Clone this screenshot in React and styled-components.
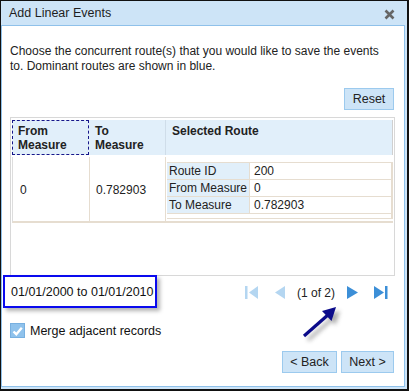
import React from "react";
import styled, { createGlobalStyle } from "styled-components";

const GlobalStyle = createGlobalStyle`
  body {
    margin: 0;
    background: #ffffff;
    font-family: "Liberation Sans", Arial, sans-serif;
  }
`;

const Frame = styled.div`
  box-sizing: border-box;
  width: 409px;
  height: 391px;
  border-top: 1px solid #111;
  border-left: 1px solid #111;
  border-right: 2px solid #111;
  border-bottom: 2px solid #111;
  background: #cde4f7;
  display: flex;
  flex-direction: column;
  padding: 0 2px 2px 0;
`;

const TitleBar = styled.div`
  height: 24px;
  display: flex;
  align-items: center;
  justify-content: space-between;
  padding: 0 10px 0 8px;
  font-size: 12.5px;
  color: #1e1e1e;
`;

const CloseButton = styled.svg`
  width: 11px;
  height: 11px;
  margin-top: 3px;
`;

const Content = styled.div`
  position: relative;
  flex: 1;
  background: #fff;
  border: 1px solid #8fc1ea;
  padding: 0 9px 0 8px;
  display: flex;
  flex-direction: column;
  font-size: 12px;
  color: #222;
`;

const Description = styled.p`
  margin: 18px 0 0 0;
  line-height: 15px;
`;

const ButtonRow = styled.div`
  display: flex;
  justify-content: flex-end;
  gap: 4px;
  margin-top: ${(p) => p.$top}px;
  padding-right: 1px;
`;

const Button = styled.button`
  box-sizing: border-box;
  height: 22px;
  width: ${(p) => p.$width}px;
  background: #cde4f7;
  border: 1px solid #9ccaee;
  font-family: "Liberation Sans", Arial, sans-serif;
  font-size: 12.5px;
  color: #222;
  padding: 0;
`;

const TableFrame = styled.div`
  box-sizing: border-box;
  margin-top: 7px;
  height: 159px;
  border: 1px solid #d8d8d8;
  padding: 2px 1px 0 1px;
`;

const Row = styled.div`
  display: grid;
  grid-template-columns: 77px 76px 1fr;
`;

const HeaderRow = styled(Row)`
  height: 35px;
  background: #e1effa;
  font-weight: bold;
  line-height: 14px;
  border-right: 1px solid #d0d0d0;
`;

const HeaderCell = styled.div`
  box-sizing: border-box;
  padding: 4px 0 0 ${(p) => p.$pad}px;
  border-left: ${(p) => (p.$sep ? "1px solid #cfdde9" : "none")};
  outline: ${(p) => (p.$focus ? "1px dashed #16168a" : "none")};
  outline-offset: -1px;
`;

const BodyRow = styled(Row)`
  margin-top: 2px;
  height: 64px;
  border-left: 1px solid #ddd;
  border-bottom: 2px solid #e6ddd0;
`;

const BodyCell = styled.div`
  display: flex;
  align-items: center;
  padding-left: ${(p) => p.$pad}px;
  padding-top: 2px;
  border-right: 1px solid #e6ddd0;
`;

const RouteCell = styled.div`
  padding: 5px 0 0 1px;
`;

const InnerTable = styled.div`
  display: grid;
  grid-template-columns: 83px 1fr;
  border-top: 1px solid #e6ddd0;
  border-right: 2px solid #e6ddd0;
`;

const InnerLabel = styled.div`
  height: ${(p) => p.$h}px;
  line-height: ${(p) => p.$h}px;
  background: #e1effa;
  padding-left: 2px;
  border-bottom: 1px solid #e6ddd0;
  border-right: 1px solid #e6ddd0;
`;

const InnerValue = styled.div`
  height: ${(p) => p.$h}px;
  line-height: ${(p) => p.$h}px;
  padding-left: 4px;
  border-bottom: 1px solid #e6ddd0;
`;

const FooterRow = styled.div`
  display: flex;
  align-items: center;
  justify-content: space-between;
  margin: -1px 7px 0 -7px;
  height: 33px;
`;

const DateBox = styled.div`
  box-sizing: border-box;
  width: 154px;
  height: 33px;
  border: 2px solid #0a0aee;
  box-shadow: 3px 3px 4px rgba(0, 0, 0, 0.3);
  padding: 1px 0 0 6px;
  display: flex;
  align-items: center;
  font-size: 12.5px;
  color: #111;
`;

const Pager = styled.div`
  display: flex;
  align-items: center;
  gap: 12px;
  padding-top: 2px;
  color: #222;
`;

const PageIcon = styled.svg`
  width: ${(p) => p.$w}px;
  height: 13px;
  fill: ${(p) => (p.$on ? "#3c8fd7" : "#b4d6f1")};
  margin-right: ${(p) => p.$mr || 0}px;
`;

const CheckRow = styled.label`
  display: flex;
  align-items: center;
  gap: 5px;
  margin-top: 15px;
  font-size: 12.5px;
  color: #111;
`;

const CheckBox = styled.span`
  box-sizing: border-box;
  width: 15px;
  height: 15px;
  background: #8fc2ec;
  border: 1px solid #78b0e0;
  display: flex;
  align-items: center;
  justify-content: center;
`;

const Arrow = styled.svg`
  position: absolute;
  left: 294px;
  top: 276px;
  width: 48px;
  height: 44px;
  overflow: visible;
`;

export default function App() {
  return (
    <>
      <GlobalStyle />
      <Frame>
        <TitleBar>
          <span>Add Linear Events</span>
          <CloseButton viewBox="0 0 11 11">
            <path
              d="M1.5 1.5 L9.5 9.5 M9.5 1.5 L1.5 9.5"
              stroke="#666"
              strokeWidth="2.6"
              strokeLinecap="butt"
            />
          </CloseButton>
        </TitleBar>
        <Content>
          <Description>
            Choose the concurrent route(s) that you would like to save the events
            to. Dominant routes are shown in blue.
          </Description>
          <ButtonRow $top={14}>
            <Button $width={50}>Reset</Button>
          </ButtonRow>
          <TableFrame>
            <HeaderRow>
              <HeaderCell $pad={6} $focus>
                From
                <br />
                Measure
              </HeaderCell>
              <HeaderCell $pad={6}>
                To
                <br />
                Measure
              </HeaderCell>
              <HeaderCell $pad={6} $sep>
                Selected Route
              </HeaderCell>
            </HeaderRow>
            <BodyRow>
              <BodyCell $pad={7}>0</BodyCell>
              <BodyCell $pad={6}>0.782903</BodyCell>
              <RouteCell>
                <InnerTable>
                  <InnerLabel $h={16}>Route ID</InnerLabel>
                  <InnerValue $h={16}>200</InnerValue>
                  <InnerLabel $h={16}>From Measure</InnerLabel>
                  <InnerValue $h={16}>0</InnerValue>
                  <InnerLabel $h={16}>To Measure</InnerLabel>
                  <InnerValue $h={16}>0.782903</InnerValue>
                  <InnerValue $h={4} />
                  <InnerValue $h={4} />
                </InnerTable>
              </RouteCell>
            </BodyRow>
          </TableFrame>
          <FooterRow>
            <DateBox>01/01/2000 to 01/01/2010</DateBox>
            <Pager>
              <PageIcon $w={14} $mr={4} viewBox="0 0 14 13">
                <rect x="0" y="0" width="2.5" height="13" />
                <polygon points="13,0 13,13 4,6.5" />
              </PageIcon>
              <PageIcon $w={10} viewBox="0 0 10 13">
                <polygon points="10,0 10,13 0,6.5" />
              </PageIcon>
              <span>(1 of 2)</span>
              <PageIcon $w={11} $mr={4} $on viewBox="0 0 11 13">
                <polygon points="0,0 0,13 11,6.5" />
              </PageIcon>
              <PageIcon $w={14} $on viewBox="0 0 14 13">
                <polygon points="0,0 0,13 10,6.5" />
                <rect x="11" y="0" width="2.5" height="13" />
              </PageIcon>
            </Pager>
          </FooterRow>
          <CheckRow>
            <CheckBox>
              <svg width="11" height="10" viewBox="0 0 11 10">
                <path
                  d="M1.5 5.5 L4.3 8.2 L9.8 1.8"
                  stroke="#fff"
                  strokeWidth="2.4"
                  fill="none"
                />
              </svg>
            </CheckBox>
            Merge adjacent records
          </CheckRow>
          <ButtonRow $top={13}>
            <Button $width={55}>&lt; Back</Button>
            <Button $width={53}>Next &gt;</Button>
          </ButtonRow>
          <Arrow viewBox="0 0 48 44">
            <defs>
              <filter id="arrowShadow" x="-50%" y="-50%" width="200%" height="200%">
                <feGaussianBlur stdDeviation="2" />
              </filter>
            </defs>
            <g transform="translate(4 4)" fill="#888" stroke="#888" filter="url(#arrowShadow)" opacity="0.7">
              <line x1="8" y1="34" x2="33" y2="12" strokeWidth="3.2" />
              <polygon points="40,5 35.5,19 26,9" stroke="none" />
            </g>
            <line x1="8" y1="34" x2="33" y2="12" stroke="#0b0b8a" strokeWidth="3.2" />
            <polygon points="40,5 35.5,19 26,9" fill="#0b0b8a" />
          </Arrow>
        </Content>
      </Frame>
    </>
  );
}
